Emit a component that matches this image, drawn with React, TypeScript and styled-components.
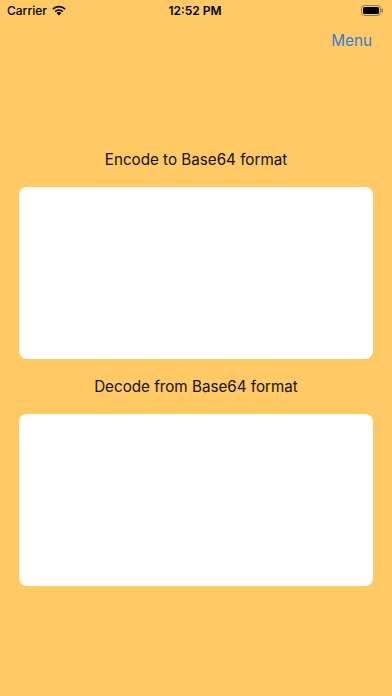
import React from "react";
import styled, { createGlobalStyle } from "styled-components";

const GlobalStyle = createGlobalStyle`
    html, body {
        margin: 0;
        padding: 0;
        background: #ffca66;
    }
    body {
        font-family: "Inter", "Liberation Sans", sans-serif;
    }
`;

const Screen = styled.div`
    width: 392px;
    height: 696px;
    background: #ffca66;
    display: flex;
    flex-direction: column;
    overflow: hidden;
`;

const StatusBar = styled.div`
    height: 20px;
    display: grid;
    grid-template-columns: 1fr auto 1fr;
    align-items: center;
    padding: 0 9px 0 7px;
    font-size: 12px;
    color: #000;
`;

const Carrier = styled.div`
    display: flex;
    align-items: center;
    gap: 4px;
    font-weight: 500;
`;

const Clock = styled.div`
    font-weight: 600;
`;

const BatteryWrap = styled.div`
    display: flex;
    justify-content: flex-end;
    align-items: center;
`;

const NavBar = styled.div`
    height: 40px;
    display: flex;
    align-items: center;
    justify-content: flex-end;
    padding-right: 20px;
`;

const MenuButton = styled.button`
    background: none;
    border: none;
    padding: 0;
    font-family: inherit;
    font-size: 15.3px;
    color: #2f80d2;
`;

const Content = styled.div`
    display: flex;
    flex-direction: column;
    padding: 90px 19px 0 19px;
`;

const Section = styled.div`
    display: flex;
    flex-direction: column;
    gap: 17px;
    margin-bottom: 18px;
`;

const Label = styled.div`
    text-align: center;
    font-size: 15.2px;
    line-height: 20px;
    color: #111;
`;

const TextBox = styled.textarea`
    height: 172px;
    border: none;
    border-radius: 8px;
    background: #fff;
    resize: none;
    padding: 8px;
    box-sizing: border-box;
    outline: none;
    font-family: inherit;
    font-size: 14px;
`;

const WifiIcon = () => (
    <svg width="16" height="12" viewBox="0 0 16 12">
        <path d="M8 11.5 L5.6 9 A3.4 3.4 0 0 1 10.4 9 Z" fill="#000" />
        <path d="M3.6 7 A6.2 6.2 0 0 1 12.4 7 L11.2 8.2 A4.5 4.5 0 0 0 4.8 8.2 Z" fill="#000" />
        <path d="M1.3 4.6 A9.5 9.5 0 0 1 14.7 4.6 L13.5 5.8 A7.8 7.8 0 0 0 2.5 5.8 Z" fill="#000" />
    </svg>
);

const BatteryIcon = () => (
    <svg width="22" height="11" viewBox="0 0 22 11">
        <rect x="0.5" y="0.5" width="19" height="10" rx="3" fill="none" stroke="#8a7a55" strokeWidth="1" />
        <rect x="2" y="2" width="16" height="7" rx="1.6" fill="#000" />
        <path d="M20.5 3.5 A2 2 0 0 1 20.5 7.5 Z" fill="#8a7a55" />
    </svg>
);

export default function App() {
    return (
        <>
            <GlobalStyle />
            <Screen>
                <StatusBar>
                    <Carrier>
                        Carrier
                        <WifiIcon />
                    </Carrier>
                    <Clock>12:52 PM</Clock>
                    <BatteryWrap>
                        <BatteryIcon />
                    </BatteryWrap>
                </StatusBar>
                <NavBar>
                    <MenuButton>Menu</MenuButton>
                </NavBar>
                <Content>
                    <Section>
                        <Label>Encode to Base64 format</Label>
                        <TextBox />
                    </Section>
                    <Section>
                        <Label>Decode from Base64 format</Label>
                        <TextBox />
                    </Section>
                </Content>
            </Screen>
        </>
    );
}
